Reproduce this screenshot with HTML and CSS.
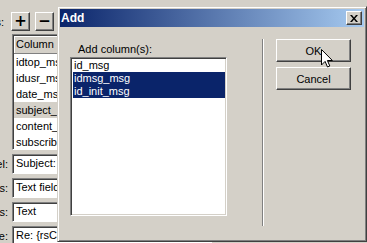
FILE: index.html
```html
<!DOCTYPE html>
<html lang="en">
<head>
    <meta charset="UTF-8">
    <title>Add column</title>
    <link rel="stylesheet" href="styles.css">
</head>
<body>
    <div class="app">
        <div class="row tools">
            <span class="lbl">Columns:</span>
            <button class="tbtn">+</button>
            <button class="tbtn">&minus;</button>
        </div>
        <div class="row">
            <span class="lbl"></span>
            <div class="grid">
                <div class="head">Column</div>
                <div class="cell">idtop_msg</div>
                <div class="cell">idusr_msg</div>
                <div class="cell">date_msg</div>
                <div class="cell sel">subject_msg</div>
                <div class="cell">content_msg</div>
                <div class="cell">subscribe_msg</div>
            </div>
        </div>
        <div class="row field">
            <span class="lbl">Label:</span>
            <div class="input">Subject:</div>
        </div>
        <div class="row field">
            <span class="lbl">Display as:</span>
            <div class="input">Text field</div>
        </div>
        <div class="row field">
            <span class="lbl">Submit as:</span>
            <div class="input">Text</div>
        </div>
        <div class="row field">
            <span class="lbl">Default value:</span>
            <div class="input">Re: {rsContent.subject_msg}</div>
        </div>
    </div>

    <div class="dialog">
        <div class="titlebar">
            <span class="title">Add</span>
            <button class="close">
                <svg width="8" height="7" viewBox="0 0 8 7">
                    <path d="M0 0h2l2 2.5L6 0h2L5 3.5 8 7H6L4 4.5 2 7H0l3-3.5z" fill="#000"/>
                </svg>
            </button>
        </div>
        <div class="body">
            <div class="left">
                <div class="caption">Add column(s):</div>
                <div class="listbox">
                    <div class="item">id_msg</div>
                    <div class="item sel">idmsg_msg</div>
                    <div class="item sel">id_init_msg</div>
                </div>
            </div>
            <div class="sep"></div>
            <div class="buttons">
                <button class="btn">OK</button>
                <button class="btn">Cancel</button>
            </div>
        </div>
    </div>

    <svg class="cursor" width="12" height="19" viewBox="0 0 12 19">
        <path d="M0.5 0.5v15.5l3.6-3.6 2.4 5.6 2.3-1-2.4-5.5h5z" fill="#fff" stroke="#000" stroke-width="1"/>
    </svg>
</body>
</html>
```

FILE: styles.css
```css
body {
    margin: 0;
    width: 367px;
    height: 243px;
    overflow: hidden;
    background-color: #d4d0c8;
    font-family: "Liberation Sans", Arial, sans-serif;
    font-size: 11px;
    color: #000;
    position: relative;
}

/* window behind the dialog */
.app {
    display: flex;
    flex-direction: column;
    padding-top: 12px;
}

.row {
    display: flex;
    align-items: center;
    gap: 4px;
}

.lbl {
    width: 8px;
    display: flex;
    justify-content: flex-end;
    overflow: hidden;
    white-space: nowrap;
    flex-shrink: 0;
}

.tools {
    gap: 3px;
    margin-bottom: 3px;
}

.tools .lbl {
    width: 4px;
    margin-right: 4px;
}

.tbtn {
    width: 19px;
    height: 19px;
    padding: 0;
    margin: 0 2px 0 0;
    background-color: #d4d0c8;
    border: 1px solid;
    border-color: #fff #404040 #404040 #fff;
    box-shadow: inset -1px -1px #808080;
    font-family: "DejaVu Sans", sans-serif;
    font-size: 15px;
    font-weight: bold;
    line-height: 15px;
    color: #000;
}

.grid {
    width: 200px;
    height: 116px;
    background-color: #fff;
    border: 1px solid;
    border-color: #808080 #fff #fff #808080;
    box-shadow: inset 1px 1px #404040;
    box-sizing: border-box;
    padding: 1px 0 0 1px;
    overflow: hidden;
}

.head {
    height: 18px;
    line-height: 17px;
    padding-left: 2px;
    box-sizing: border-box;
    background-color: #d4d0c8;
    border-bottom: 1px solid #808080;
    box-shadow: inset 1px 1px #fff;
}

.cell {
    height: 16px;
    line-height: 16px;
    padding-left: 2px;
    white-space: nowrap;
}

.cell.sel {
    background-color: #d4d0c8;
}

.field {
    margin-top: 4px;
}

.input {
    width: 200px;
    height: 20px;
    line-height: 16px;
    box-sizing: border-box;
    padding-left: 3px;
    background-color: #fff;
    border: 1px solid;
    border-color: #808080 #fff #fff #808080;
    box-shadow: inset 1px 1px #404040;
    white-space: nowrap;
    overflow: hidden;
}

/* dialog */
.dialog {
    position: absolute;
    left: 57px;
    top: 6px;
    width: 310px;
    height: 236px;
    box-sizing: border-box;
    padding: 2px;
    background-color: #d4d0c8;
    border: 1px solid;
    border-color: #d4d0c8 #404040 #404040 #d4d0c8;
    box-shadow: inset 1px 1px #fff, inset -1px -1px #808080;
}

.titlebar {
    height: 18px;
    display: flex;
    align-items: center;
    justify-content: space-between;
    padding: 0 2px 0 1px;
    background: linear-gradient(to right, #0a246a, #a6caf0);
}

.title {
    color: #fff;
    font-weight: bold;
    font-size: 12px;
}

.close {
    width: 16px;
    height: 14px;
    padding: 0;
    display: flex;
    align-items: center;
    justify-content: center;
    background-color: #d4d0c8;
    border: 1px solid;
    border-color: #fff #404040 #404040 #fff;
    box-shadow: inset -1px -1px #808080;
}

.body {
    display: flex;
    padding: 12px 0 0 10px;
}

.left {
    width: 157px;
}

.caption {
    padding: 4px 0 1px 8px;
    line-height: 13px;
}

.listbox {
    height: 159px;
    box-sizing: border-box;
    border: 1px solid;
    border-color: #808080 #fff #fff #808080;
    box-shadow: inset 1px 1px #404040, inset -1px -1px #d4d0c8;
    background-color: #fff;
    padding: 1px 1px 0 2px;
}

.item {
    height: 13px;
    line-height: 13px;
    padding-left: 1px;
}

.item.sel {
    background-color: #0a246a;
    color: #fff;
}

.sep {
    width: 1px;
    height: 187px;
    margin-left: 35px;
    background-color: #808080;
    border-right: 1px solid #fff;
}

.buttons {
    display: flex;
    flex-direction: column;
    gap: 5px;
    margin-left: 12px;
}

.btn {
    width: 75px;
    height: 23px;
    padding: 0;
    background-color: #d4d0c8;
    border: 1px solid;
    border-color: #fff #404040 #404040 #fff;
    box-shadow: inset -1px -1px #808080;
    font-family: "Liberation Sans", Arial, sans-serif;
    font-size: 11px;
    color: #000;
}

.cursor {
    position: absolute;
    left: 321px;
    top: 49px;
}
```
